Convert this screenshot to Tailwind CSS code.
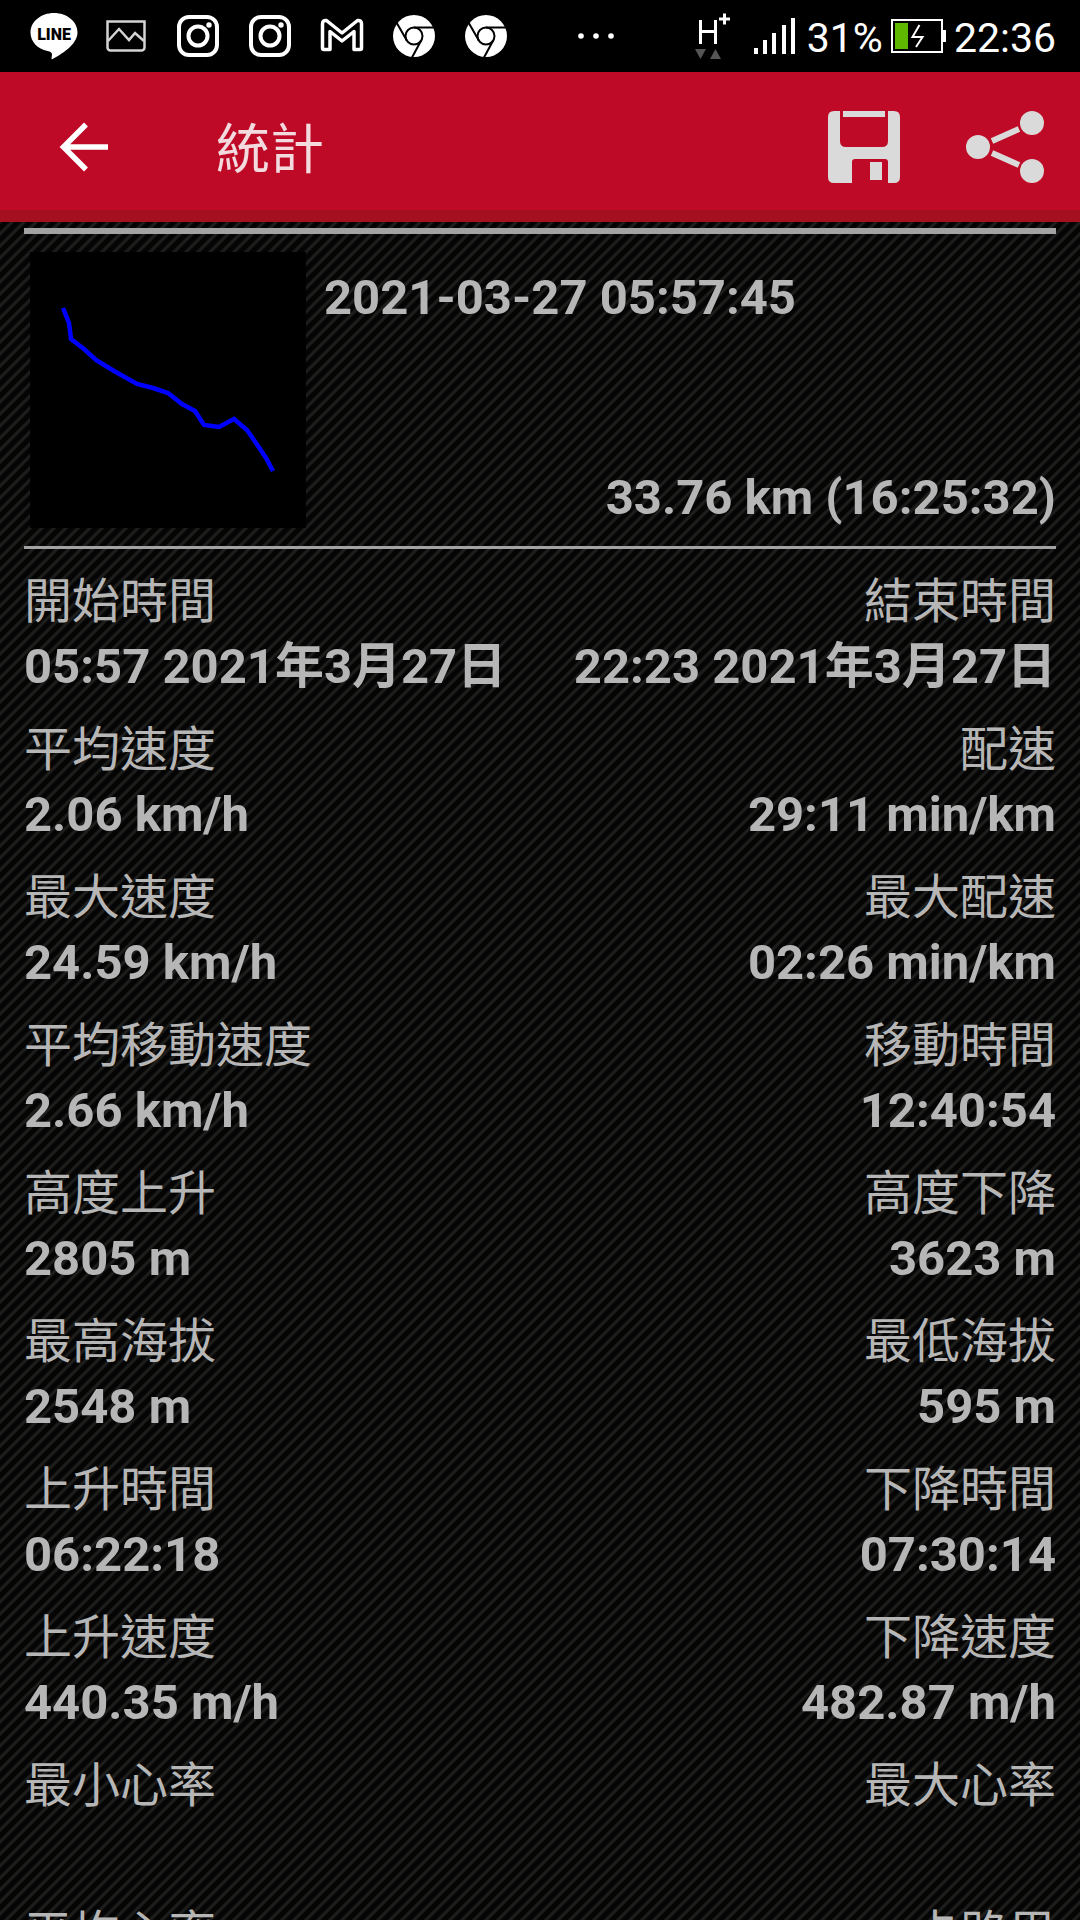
<!-- statistics.html -->
<!DOCTYPE html>
<html lang="zh-Hant">
<head>
  <meta charset="UTF-8" />
  <meta name="viewport" content="width=device-width, initial-scale=1.0" />
  <title>統計</title>
  <script src="https://cdn.jsdelivr.net/npm/@tailwindcss/browser@4"></script>
</head>
<body class="flex flex-col h-screen overflow-hidden bg-black text-[#b6b6b6] font-['Roboto','Noto_Sans_CJK_TC',sans-serif]">

  <!-- Status bar -->
  <div class="flex shrink-0 items-center justify-between h-[72px] pl-[30px] pr-6 text-white">
    <div class="flex items-center gap-6">
      <svg class="w-12 h-12" viewBox="0 0 48 48" role="img" aria-label="LINE">
        <path fill="#fff" d="M24 1C11 1 .5 9.500.5 20.500c0 9 7 16.500 17 18.500 3 .6 4.500 1.500 4.500 3.500l-.5 4.200c0 .5.500.6 1 .3C30 43 47.500 33 47.500 20.500 47.500 9.500 37 1 24 1z" />
        <text x="24" y="28" text-anchor="middle" font-family="Roboto" font-weight="900" font-size="16" fill="#000">LINE</text>
      </svg>
      <svg class="w-12 h-12" viewBox="0 0 48 48" fill="none" stroke="#d4d4d4" stroke-width="2.500">
        <path d="M5.500 9.500h37v26a3 3 0 0 1-3 3h-31a3 3 0 0 1-3-3z" />
        <path d="M6 29l11-12 10 11 6-7 9 8" />
      </svg>
      <svg class="w-12 h-12" viewBox="0 0 48 48" fill="none" stroke="#fff" stroke-width="4">
        <rect x="5" y="5" width="38" height="38" rx="10" />
        <circle cx="24" cy="24" r="9.500" />
        <circle cx="35" cy="13" r="2.700" fill="#fff" stroke="none" />
      </svg>
      <svg class="w-12 h-12" viewBox="0 0 48 48" fill="none" stroke="#fff" stroke-width="4">
        <rect x="5" y="5" width="38" height="38" rx="10" />
        <circle cx="24" cy="24" r="9.500" />
        <circle cx="35" cy="13" r="2.700" fill="#fff" stroke="none" />
      </svg>
      <svg class="w-12 h-12" viewBox="0 0 48 48" fill="none" stroke="#fff" stroke-width="3.500" stroke-linejoin="round">
        <path d="M4.500 12v24q0 1.500 1.500 1.500h6V19.500l12 9.500 12-9.500v18h6q1.500 0 1.500-1.500V12q0-4-4-3.500L24 21 8.500 8.500Q4.500 8 4.500 12z" />
      </svg>
      <svg class="w-12 h-12" viewBox="0 0 48 48" fill="none" stroke="#000" stroke-width="2">
        <circle cx="24" cy="24" r="21" fill="#fff" stroke="none" />
        <circle cx="24" cy="24" r="8.500" />
        <path d="M24 15.500h20M16.700 28.200L6.500 10.500M31.300 28.200L22 45.500" />
      </svg>
      <svg class="w-12 h-12" viewBox="0 0 48 48" fill="none" stroke="#000" stroke-width="2">
        <circle cx="24" cy="24" r="21" fill="#fff" stroke="none" />
        <circle cx="24" cy="24" r="8.500" />
        <path d="M24 15.500h20M16.700 28.200L6.500 10.500M31.300 28.200L22 45.500" />
      </svg>
      <svg class="w-12 h-12 ml-[38px]" viewBox="0 0 48 48" fill="#fff">
        <circle cx="9" cy="24" r="2.800" /><circle cx="24" cy="24" r="2.800" /><circle cx="39" cy="24" r="2.800" />
      </svg>
    </div>
    <div class="flex items-center">
      <svg class="w-[104px] h-12" viewBox="0 0 104 48" role="img" aria-label="H+">
        <path fill="none" stroke="#fff" stroke-width="3" d="M5.500 8v24M20.500 8v24M5.500 19.500h15M24 7h11M29.500 1.500v11" />
        <path fill="#555" d="M0 37h11l-5.500 10zM15 47h11l-5.500-10z" />
        <path fill="#fff" d="M59 36h4v6h-4zM68 28h4v14h-4zM77 21h4v21h-4zM87 13h4v29h-4zM96 6h4v36h-4z" />
      </svg>
      <span class="ml-2 pt-1 text-[41px]/12">31%</span>
      <svg class="w-[55px] h-12 ml-2" viewBox="0 0 55 48">
        <rect x="1" y="8" width="50" height="32" fill="none" stroke="#fff" stroke-width="2" />
        <path fill="#fff" d="M52 18h3v12h-3z" />
        <path fill="#5fb700" d="M4 11h13v26H4z" />
        <path fill="none" stroke="#fff" stroke-width="2" d="M28.500 13l-7 12h10l-6.500 10" />
      </svg>
      <span class="ml-2 pt-1 text-[41px]/12">22:36</span>
    </div>
  </div>

  <!-- Toolbar -->
  <header class="flex shrink-0 items-center h-[150px] pl-12 pr-9 bg-[#be0a26] border-b-12 border-[#a51021]">
    <button class="mt-3" aria-label="返回">
      <svg class="w-[72px] h-[72px]" viewBox="0 0 72 72" fill="none" stroke="#fff" stroke-width="5.500">
        <path d="M60 36H17M38 13.500L15.500 36 38 58.500" />
      </svg>
    </button>
    <h1 class="grow mt-5 ml-24 text-[54px]/[72px] text-[#f2dade]">統計</h1>
    <button class="mt-3" aria-label="儲存">
      <svg class="w-[72px] h-[72px]" viewBox="0 0 72 72" fill="#dadada">
        <path d="M6 0h6v30q0 6 6 6h36q6 0 6-6V0h6q6 0 6 6v60q0 6-6 6h-6V51q0-3-3-3H27q-3 0-3 3v21H6q-6 0-6-6V6q0-6 6-6z" />
        <path d="M15 0h42v6H15zM42 51h12v18H42z" />
      </svg>
    </button>
    <button class="mt-3 ml-[66px]" aria-label="分享">
      <svg class="w-[78px] h-[72px]" viewBox="0 0 78 72" fill="#dadada" stroke="#dadada">
        <g stroke="none"><circle cx="12" cy="36" r="12" /><circle cx="66" cy="12" r="12" /><circle cx="66" cy="60" r="12" /></g>
        <path stroke-width="6" d="M26 30l27-12M26 42l27 12" />
      </svg>
    </button>
  </header>

  <main class="grow overflow-hidden px-6 pt-1.5 bg-[#040404] bg-[linear-gradient(135deg,#21211f_0%,#1a1a18_5%,#040404_15%,#040404_35%,#1a1a18_45%,#21211f_50%,#1a1a18_55%,#040404_65%,#040404_85%,#1a1a18_95%,#21211f_100%)] bg-size-[12px_12px]">
    <!-- Track summary -->
    <section class="flex gap-[18px] pl-1.5 py-[18px] border-t-6 border-b-3 border-[#a3a3a3] text-[49px]/15 font-bold">
      <svg class="shrink-0 w-[276px] h-[276px] bg-black" viewBox="0 0 276 276" fill="none" stroke="#00f" stroke-width="4.500">
        <polyline points="33,56 39,71 41,87 54,97 66,108 84,119 107,132 123,136 138,141 152,152 165,159 174,173 189,175 204,167 217,178 226,191 236,206 243,219" />
      </svg>
      <div class="flex flex-col grow justify-between pt-4">
        <p>2021-03-27 05:57:45</p>
        <p class="text-right">33.76 km (16:25:32)</p>
      </div>
    </section>

    <!-- Statistics, filled from the list below -->
    <dl id="stats" class="grid grid-cols-[auto_auto] pt-[21px]"></dl>
  </main>

  <script>
    const stats = [
      ['開始時間', '05:57 2021年3月27日', '結束時間', '22:23 2021年3月27日'],
      ['平均速度', '2.06 km/h', '配速', '29:11 min/km'],
      ['最大速度', '24.59 km/h', '最大配速', '02:26 min/km'],
      ['平均移動速度', '2.66 km/h', '移動時間', '12:40:54'],
      ['高度上升', '2805 m', '高度下降', '3623 m'],
      ['最高海拔', '2548 m', '最低海拔', '595 m'],
      ['上升時間', '06:22:18', '下降時間', '07:30:14'],
      ['上升速度', '440.35 m/h', '下降速度', '482.87 m/h'],
      ['最小心率', '', '最大心率', ''],
      ['平均心率', '', '卡路里', ''],
    ];

    const cell = (label, value) => `
      <dt class="text-5xl/16">${label}</dt>
      <dd class="h-[84px] text-[49px]/[66px] font-bold">${value}</dd>`;

    document.getElementById('stats').innerHTML = stats.map(([l1, v1, l2, v2]) => `
      <div>${cell(l1, v1)}</div>
      <div class="text-right">${cell(l2, v2)}</div>`).join('');
  </script>
</body>
</html>
